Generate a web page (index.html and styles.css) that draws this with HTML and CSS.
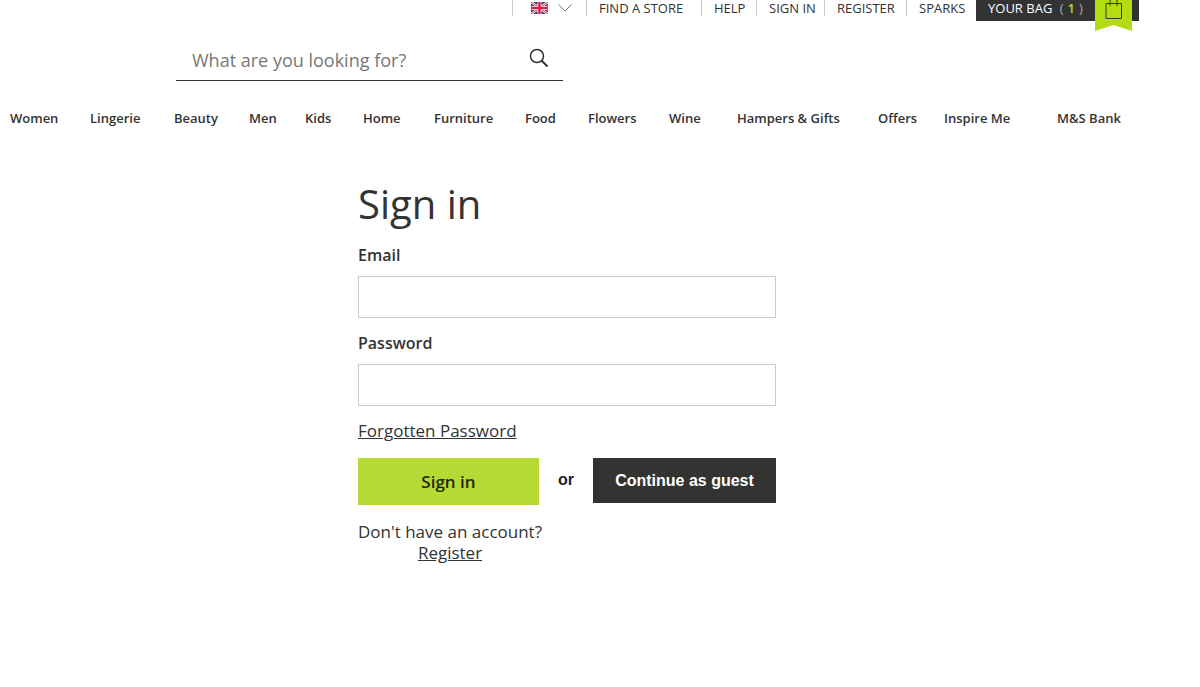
FILE: index.html
```
<!DOCTYPE html>
<html lang="en">
<head>
  <meta charset="UTF-8" />
  <meta name="viewport" content="width=device-width, initial-scale=1.0">
  <title>Sign in</title>
  <link rel="stylesheet" href="styles.css">
</head>
<body>
  <header>
    <div class="topbar">
      <button class="country" type="button" aria-label="Choose country">
        <svg width="17" height="12" viewBox="0 0 34 24">
          <rect width="34" height="24" fill="#35407f" />
          <path d="M0 0L34 24M34 0L0 24" stroke="#f4e4ea" stroke-width="5" />
          <path d="M0 0L34 24M34 0L0 24" stroke="#d94a62" stroke-width="2" />
          <path d="M17 0V24M0 12H34" stroke="#f6eaee" stroke-width="8" />
          <path d="M17 0V24M0 12H34" stroke="#d5223f" stroke-width="5" />
        </svg>
        <svg width="14" height="8" viewBox="0 0 14 8">
          <path d="M.5 .5L7 7L13.500 .5" fill="none" stroke="#777" />
        </svg>
      </button>
      <a href="#">FIND A STORE</a>
      <a href="#">HELP</a>
      <a href="#">SIGN IN</a>
      <a href="#">REGISTER</a>
      <a href="#">SPARKS</a>
      <a class="bag" href="#">YOUR BAG <span class="bracket">(</span><span class="count">1</span><span class="bracket">)</span>
        <svg class="ribbon" width="37" height="31" viewBox="0 0 37 31">
          <path d="M0 0H37V31L18.500 25L0 31Z" fill="#b4dc14" />
          <path d="M11 3.500H26.500V18.500H11Z" fill="none" stroke="#333b12" />
          <path d="M15 6V1C15 -2 22 -2 22 1V6" fill="none" stroke="#333b12" />
        </svg>
      </a>
    </div>
    <form class="search">
      <input type="text" placeholder="What are you looking for?" aria-label="Search" />
      <button type="submit" aria-label="Search">
        <svg width="20" height="20" viewBox="0 0 20 20" fill="none" stroke="#333" stroke-width="1.500">
          <circle cx="8" cy="8" r="6.500" />
          <path d="M12.500 12.500L18.500 18.500" stroke-width="2" />
        </svg>
      </button>
    </form>
    <nav>
      <a href="#">Women</a>
      <a href="#">Lingerie</a>
      <a href="#">Beauty</a>
      <a href="#">Men</a>
      <a href="#">Kids</a>
      <a href="#">Home</a>
      <a href="#">Furniture</a>
      <a href="#">Food</a>
      <a href="#">Flowers</a>
      <a href="#">Wine</a>
      <a href="#">Hampers &amp; Gifts</a>
      <a href="#">Offers</a>
      <a href="#">Inspire Me</a>
      <a href="#">M&amp;S Bank</a>
    </nav>
  </header>
  <main>
    <form class="signin">
      <h1>Sign in</h1>
      <label for="email">Email</label>
      <input type="email" id="email" />
      <label for="password">Password</label>
      <input type="password" id="password" />
      <a class="forgotten" href="#">Forgotten Password</a>
      <div class="actions">
        <button class="primary" type="submit">Sign in</button>
        <span>or</span>
        <button class="guest" type="button">Continue as guest</button>
      </div>
      <p class="register">Don't have an account? <a href="#">Register</a></p>
    </form>
  </main>
</body>
</html>
```
FILE: styles.css
```
* {
  box-sizing: border-box;
}

body {
  margin: 0;
  font-family: "Open Sans", sans-serif;
  color: #333;
  background: #fff;
}

a {
  color: inherit;
}

button {
  border: 0;
  padding: 0;
  font: inherit;
  background: none;
  cursor: pointer;
}

/* top links */
.topbar {
  display: grid;
  grid-template-columns: 74px 115px 55px 68px 82px 70px 163px;
  justify-content: end;
  align-items: start;
  padding-right: 61px;
  font-size: 13px;
  line-height: 16px;
}

.topbar a {
  padding-left: 12px;
  text-decoration: none;
  white-space: nowrap;
}

.topbar > * {
  height: 16px;
  border-left: 1px solid #ccc;
}

.country {
  display: flex;
  align-items: center;
  gap: 10px;
  padding-left: 18px;
}

.topbar .bag {
  position: relative;
  height: 21px;
  border: 0;
  color: #fff;
  background: #333;
}

.bracket {
  margin: 0 4px;
  color: #aaa;
}

.count {
  color: #b4dc14;
  font-weight: 600;
}

.ribbon {
  position: absolute;
  top: 0;
  right: 7px;
}

/* search */
.search {
  display: flex;
  width: 387px;
  max-width: 100%;
  height: 42px;
  margin: 18px 0 0 176px;
  border-bottom: 1px solid #333;
}

.search input {
  flex: 1;
  min-width: 0;
  border: 0;
  padding: 0 16px;
  font: inherit;
  font-size: 18px;
}

.search input::placeholder {
  color: #777;
  opacity: 1;
}

.search button {
  width: 48px;
  padding-top: 2px;
}

nav {
  display: grid;
  grid-template-columns: 80fr 84fr 75fr 56fr 58fr 71fr 91fr 63fr 81fr 68fr 141fr 66fr 113fr 143fr;
  margin-top: 27px;
  padding-left: 10px;
  font-size: 13px;
  font-weight: 600;
  line-height: 20px;
}

nav a {
  text-decoration: none;
  white-space: nowrap;
}

/* sign in form */
main {
  padding: 50px 66px 48px 0;
}

.signin {
  max-width: 418px;
  margin: 0 auto;
  font-size: 17px;
  line-height: 20px;
}

h1 {
  margin: 0 0 15px;
  font-size: 40px;
  font-weight: 400;
  line-height: 52px;
}

label {
  display: block;
  margin-bottom: 11px;
  font-size: 16px;
  font-weight: 600;
}

.signin input {
  display: block;
  width: 100%;
  height: 42px;
  margin-bottom: 15px;
  border: 1px solid #ccc;
  padding: 0 12px;
  font: inherit;
}

.forgotten {
  display: block;
  width: fit-content;
}

.actions {
  display: flex;
  align-items: flex-start;
  margin-top: 17px;
  font-family: "Liberation Sans", Arial, sans-serif;
  font-size: 16px;
  font-weight: 700;
}

.actions span {
  flex: 1;
  color: #1c1c38;
  text-align: center;
  line-height: 44px;
}

.primary {
  width: 181px;
  height: 47px;
  font-family: "Open Sans", sans-serif;
  font-size: 17px;
  font-weight: 600;
  color: #1e280c;
  background: #b5da33;
}

.guest {
  width: 183px;
  height: 45px;
  color: #fff;
  background: #333432;
}

.register {
  width: 184px;
  margin: 16px 0 0;
  text-align: center;
  line-height: 21px;
}
```
